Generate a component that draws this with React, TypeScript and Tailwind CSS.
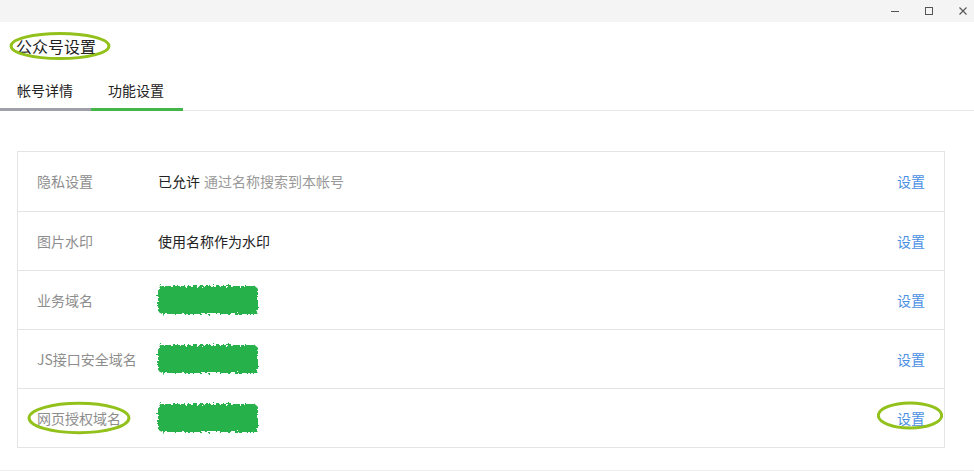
import React from "react";

const rows = [
  { label: "隐私设置", value: "已允许", note: "通过名称搜索到本帐号" },
  { label: "图片水印", value: "使用名称作为水印" },
  { label: "业务域名", masked: true },
  { label: "JS接口安全域名", masked: true },
  { label: "网页授权域名", masked: true, marked: true },
];

// Green scribble hiding the domain
const Mask = ({ id }: { id: string }) => (
  <svg width="110" height="38" viewBox="0 0 110 38" className="block">
    <defs>
      <filter id={id} x="-10%" y="-20%" width="120%" height="140%">
        <feTurbulence type="fractalNoise" baseFrequency="0.35" numOctaves="2" seed={id.length} />
        <feDisplacementMap in="SourceGraphic" scale="6" />
        <feGaussianBlur stdDeviation="0.7" />
      </filter>
    </defs>
    <g filter={`url(#${id})`} fill="#27b14c">
      <rect x="4" y="5" width="100" height="28" rx="5" />
    </g>
  </svg>
);

const Ring = ({ className }: { className: string }) => (
  <svg className={`absolute pointer-events-none ${className}`} viewBox="0 0 100 30" preserveAspectRatio="none">
    <ellipse cx="50" cy="15" rx="48" ry="13" fill="none" stroke="#93c11c" strokeWidth="3" vectorEffect="non-scaling-stroke" />
  </svg>
);

export default function App() {
  return (
    <div
      className="w-[974px] h-[471px] bg-white overflow-hidden flex flex-col"
      style={{ fontFamily: '"Noto Sans CJK SC", "Noto Sans", sans-serif' }}
    >
      {/* title bar */}
      <div className="h-[22px] bg-[#f4f4f4] flex items-center justify-end -mr-[6px] shrink-0">
        <div className="w-[34px] flex justify-center">
          <svg width="10" height="10" viewBox="0 0 10 10">
            <line x1="1" y1="5.5" x2="9" y2="5.5" stroke="#555" strokeWidth="1" />
          </svg>
        </div>
        <div className="w-[34px] flex justify-center">
          <svg width="10" height="10" viewBox="0 0 10 10">
            <rect x="1.5" y="1.5" width="7" height="7" fill="none" stroke="#555" strokeWidth="1" />
          </svg>
        </div>
        <div className="w-[34px] flex justify-center">
          <svg width="10" height="10" viewBox="0 0 10 10">
            <path d="M1.5 1.5 L8.5 8.5 M8.5 1.5 L1.5 8.5" stroke="#555" strokeWidth="1.1" />
          </svg>
        </div>
      </div>

      {/* header */}
      <div className="h-[48px] flex items-center pl-[16px] shrink-0">
        <div className="relative flex items-center">
          <span className="text-[16px] text-[#222] leading-[20px]">公众号设置</span>
          <Ring className="-left-[7px] top-1/2 -translate-y-1/2 w-[102px] h-[29px]" />
        </div>
      </div>

      {/* tabs */}
      <div className="flex h-[41px] shrink-0 border-b border-[#e6e6e6]">
        <div className="w-[91px] flex flex-col justify-between border-b-[3px] border-[#a0a1a8] -mb-px">
          <span className="pl-[17px] pt-[10px] text-[14px] text-[#222]">帐号详情</span>
        </div>
        <div className="w-[92px] flex flex-col justify-between border-b-[3px] border-[#44b549] -mb-px">
          <span className="pl-[17px] pt-[10px] text-[14px] text-[#222]">功能设置</span>
        </div>
      </div>

      {/* settings table */}
      <div className="ml-[17px] w-[928px] mt-[40px] border border-[#e4e4e4]">
        {rows.map((r, i) => (
          <div
            key={r.label}
            className={`h-[59px] flex items-center pl-[19px] pr-[19px] text-[14px] ${i > 0 ? "border-t border-[#e4e4e4]" : ""}`}
          >
            <div className="w-[121px] text-[#8d8d8d] relative">
              {r.label}
              {r.marked && <Ring className="-left-[10px] -top-[7px] w-[104px] h-[34px]" />}
            </div>
            <div className="flex-1 flex items-center">
              {r.masked ? (
                <div className="-ml-[4px]">
                  <Mask id={`m${i}`} />
                </div>
              ) : (
                <>
                  <span className="text-[#222]">{r.value}</span>
                  {r.note && <span className="ml-[4px] text-[#999]">{r.note}</span>}
                </>
              )}
            </div>
            <div className="relative text-[#4a8fe3]">
              设置
              {r.marked && <Ring className="-left-[20px] -top-[7px] w-[66px] h-[29px]" />}
            </div>
          </div>
        ))}
      </div>

      <div className="mt-auto border-b border-[#ececec]" />
    </div>
  );
}
